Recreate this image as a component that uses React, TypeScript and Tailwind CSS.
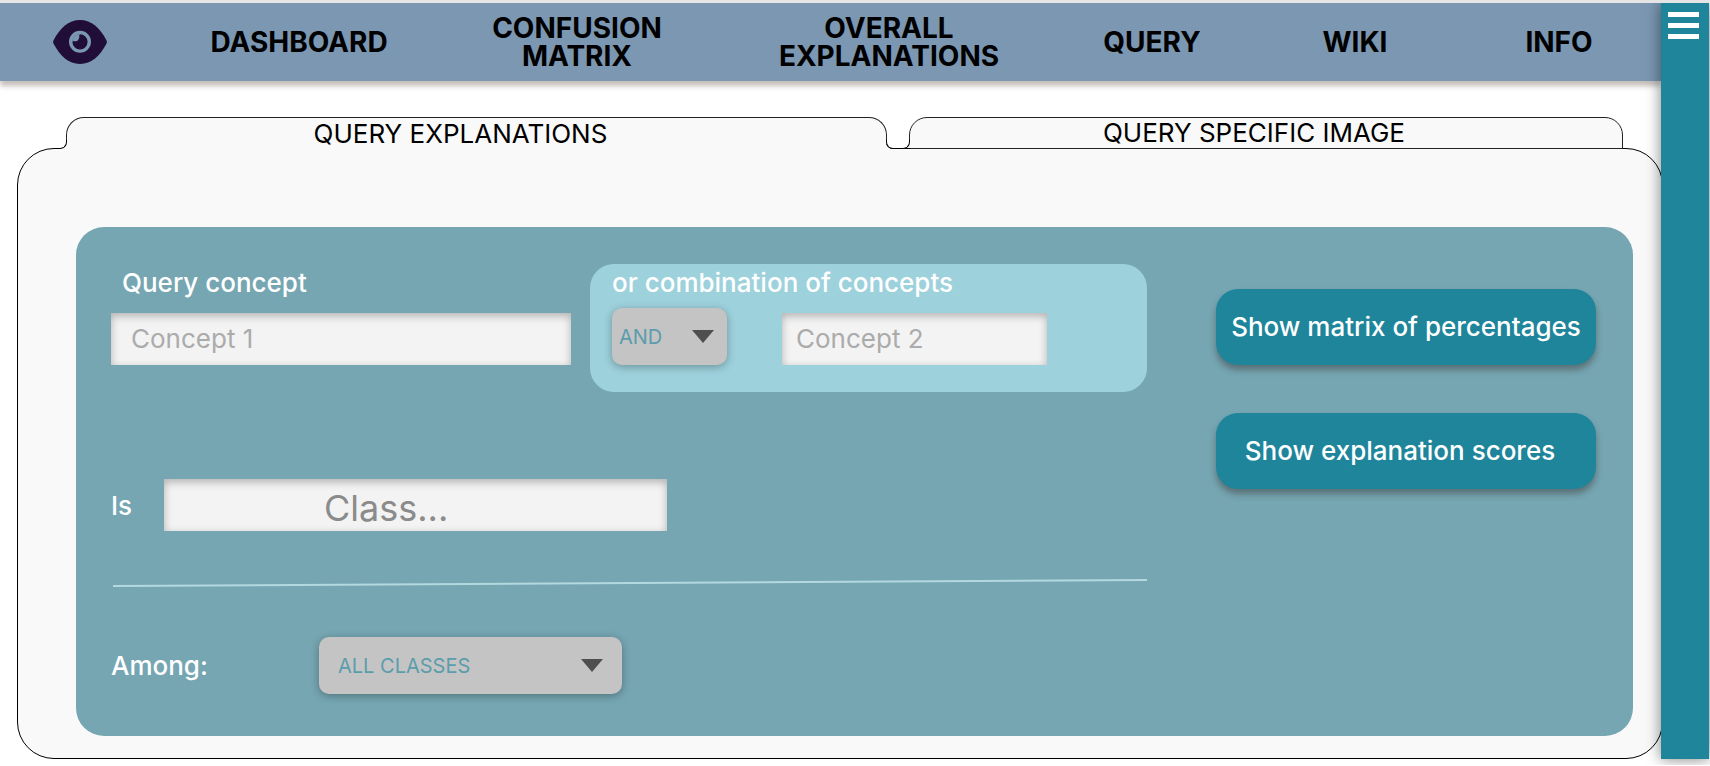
import React from "react";

const NAV_ITEMS = ["DASHBOARD", "CONFUSION MATRIX", "OVERALL EXPLANATIONS", "QUERY", "WIKI", "INFO"];

const FIELD =
  "h-[52px] rounded-none bg-[#f3f3f3] text-neutral-600 placeholder:opacity-100 shadow-[inset_0_3px_8px_rgba(0,0,0,0.28)] outline-none focus:ring-2 focus:ring-[#1e859b]";

const ACTION =
  "h-[76px] rounded-[22px] bg-[#1e859b] font-medium whitespace-nowrap shadow-[0_5px_6px_rgba(60,50,50,0.45)]";

function EyeLogo() {
  return (
    <svg viewBox="0 0 54 44" className="h-11 w-[54px]" aria-hidden="true">
      <path
        d="M0.6 20.2C7 8 15.500 0 27 0S47 8 53.400 20.200Q54.300 22 53.400 23.800C47 36 38.500 44 27 44S7 36 0.600 23.800Q-0.300 22 0.600 20.200Z"
        fill="#200e36"
      />
      <circle cx="27" cy="21.800" r="9.300" fill="none" stroke="#7b97b2" strokeWidth="3.400" />
      <path
        d="M26.200 15.300A6.500 6.500 0 1 1 20.600 20.900C22 21.900 24.300 21.200 25.300 19.700C26.300 18.200 26.600 16.700 26.200 15.300Z"
        fill="#200e36"
      />
      <path
        d="M27 14A7.800 7.800 0 0 0 19.200 21.800L20.600 20.900C22 21.900 24.300 21.200 25.300 19.700C26.300 18.200 26.600 16.700 26.200 15.300Z"
        fill="#7b97b2"
      />
    </svg>
  );
}

function Header() {
  return (
    <header className="relative grid min-h-[78px] grid-cols-[160fr_278fr_278fr_346fr_180fr_226fr_182fr_11fr] items-center bg-[#7b97b2] shadow-[0_5px_5px_rgba(70,55,45,0.32)]">
      <a href="#home" aria-label="Home" className="flex justify-center">
        <EyeLogo />
      </a>
      {NAV_ITEMS.map((item) => (
        <a key={item} href="#nav" className="flex justify-center text-center text-[28px] leading-7 font-bold text-black">
          <span className="w-min">{item}</span>
        </a>
      ))}
    </header>
  );
}

function Tabs() {
  return (
    <div role="tablist" className="relative z-10 -mb-px ml-[49px] mr-[38px] flex h-8 items-stretch">
      <span aria-hidden="true" className="absolute bottom-0 -left-2 size-[9px] bg-[#f9f9f9]">
        <span className="block size-full rounded-br-[7px] border-r border-b border-black bg-white" />
      </span>
      <button
        role="tab"
        aria-selected="true"
        className="flex-[819] rounded-t-[18px] border-x border-t border-[#222] bg-[#f9f9f9] pr-8 text-[26px] leading-[30px] text-black"
      >
        QUERY EXPLANATIONS
      </button>
      <span aria-hidden="true" className="z-10 -mx-px mt-auto h-[9px] w-6 bg-[#f9f9f9]">
        <span className="block size-full rounded-bl-[7px] border-b border-black bg-[#f9f9f9]">
          <span className="block h-[9px] rounded-b-[7px] border-x border-b border-black bg-white" />
        </span>
      </span>
      <button
        role="tab"
        aria-selected="false"
        className="flex-[716] rounded-t-[18px] border border-[#222] bg-[#f9f9f9] pr-6 text-[26px] leading-[30px] text-black"
      >
        QUERY SPECIFIC IMAGE
      </button>
    </div>
  );
}

function Dropdown({ id, label, option, boxClass, selectClass, arrowClass }: {
  id: string;
  label: string;
  option: string;
  boxClass: string;
  selectClass: string;
  arrowClass: string;
}) {
  return (
    <div className={"relative h-[57px] " + boxClass}>
      <select
        id={id}
        aria-label={label}
        className={
          "size-full appearance-none rounded-[10px] bg-[#c4c4c4] text-[20px] text-[#5b9dac] shadow-[0_2px_8px_rgba(0,0,0,0.3)] outline-none " +
          selectClass
        }
      >
        <option>{option}</option>
      </select>
      <svg viewBox="0 0 22 13" aria-hidden="true" className={"pointer-events-none absolute top-[22px] h-[13px] w-[22px] " + arrowClass}>
        <path d="M0 0H22L11 13Z" fill="#4f4f4f" />
      </svg>
    </div>
  );
}

function QueryForm() {
  return (
    <form className="grid grid-cols-[1036fr_380fr] gap-x-[69px] rounded-[28px] bg-[#75a6b2] pt-[37px] pr-[37px] pb-[42px] pl-[35px] text-[26px] leading-8 text-white">
      <div>
        <div className="grid grid-cols-[460fr_557fr] gap-x-[19px]">
          <div className="flex flex-col pt-[3px]">
            <label htmlFor="concept-1" className="pl-[11px] font-medium">Query concept</label>
            <input id="concept-1" placeholder="Concept 1" className={"mt-[14px] w-full px-5 pb-0.5 text-[26px] placeholder:text-[#ababab] " + FIELD} />
          </div>
          <div className="rounded-[24px] bg-[#9dd1dc] px-[22px] pt-[3px] pb-[27px]">
            <label htmlFor="concept-2" className="font-medium">or combination of concepts</label>
            <div className="mt-[9px] flex items-end gap-[55px]">
              <Dropdown id="operator" label="Operator" option="AND" boxClass="w-[115px]" selectClass="pl-[7px]" arrowClass="right-[13px]" />
              <input id="concept-2" placeholder="Concept 2" className={"w-[265px] px-3.5 pb-0.5 text-[26px] placeholder:text-[#ababab] " + FIELD} />
            </div>
          </div>
        </div>
        <div className="mt-[87px] flex items-center">
          <label htmlFor="class-name" className="w-[53px] pt-0.5 font-medium">Is</label>
          <input
            id="class-name"
            placeholder="Class..."
            className={"w-[503px] pt-1.5 pl-40 text-[36px] placeholder:text-[#8b8b8b] " + FIELD}
          />
        </div>
        <svg viewBox="0 0 1036 8" preserveAspectRatio="none" aria-hidden="true" className="mt-12 block h-2 w-full">
          <path d="M2 7L1036 1" stroke="#b4d8e0" strokeWidth="2" />
        </svg>
        <div className="mt-[50px] flex items-center">
          <label htmlFor="among" className="w-52 font-medium">Among:</label>
          <Dropdown id="among" label="Among" option="ALL CLASSES" boxClass="w-[303px]" selectClass="pl-[19px]" arrowClass="right-[19px]" />
        </div>
      </div>
      <div className="flex flex-col gap-12 pt-[25px]">
        <button type="button" className={ACTION}>Show matrix of percentages</button>
        <button type="button" className={"pr-3 " + ACTION}>Show explanation scores</button>
      </div>
    </form>
  );
}

export default function App() {
  return (
    <div className="flex overflow-hidden border-t-[3px] border-[#e5e5e5] bg-white pr-px pb-1.5 font-['Inter','Liberation_Sans',sans-serif]">
      <div className="min-w-0 flex-1">
        <Header />
        <main className="pt-9 pl-[17px]">
          <Tabs />
          <section className="-mr-0.5 rounded-[37px] border border-black bg-[#f9f9f9] pt-[78px] pr-[29px] pb-[22px] pl-[58px]">
            <QueryForm />
          </section>
        </main>
      </div>
      <aside className="relative z-20 w-12 bg-[#1e859b] shadow-[0_0_14px_rgba(0,0,0,0.5)]">
        <button aria-label="Menu" className="mt-[9px] ml-[7px] flex w-[31px] flex-col gap-[6px]">
          <span className="h-[5px] w-full bg-white" />
          <span className="h-[5px] w-full bg-white" />
          <span className="h-[5px] w-full bg-white" />
        </button>
      </aside>
    </div>
  );
}
